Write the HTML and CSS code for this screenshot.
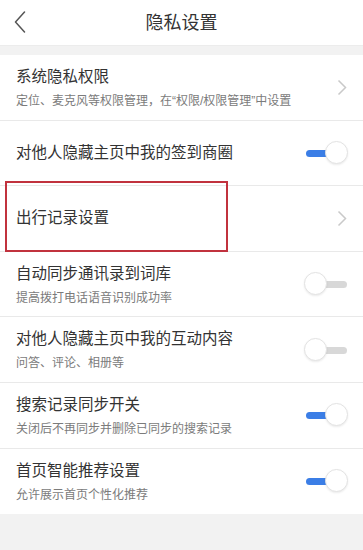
FILE: index.html
```html
<!DOCTYPE html>
<html lang="zh-CN">
<head>
<meta charset="utf-8">
<title>隐私设置</title>
<link rel="stylesheet" href="styles.css">
</head>
<body>
<div class="page">
  <header class="topbar">
    <svg class="back" width="12" height="22" viewBox="0 0 12 22"><path d="M10.5 1 L1.5 11 L10.5 21" fill="none" stroke="#555" stroke-width="1.5" stroke-linejoin="round" stroke-linecap="round"/></svg>
    <h1 class="title">隐私设置</h1>
  </header>
  <div class="gap"></div>
  <ul class="list">
    <li class="row two">
      <div class="text">
        <div class="main">系统隐私权限</div>
        <div class="sub">定位、麦克风等权限管理，在“权限/权限管理”中设置</div>
      </div>
      <svg class="chev" width="10" height="17" viewBox="0 0 10 17"><path d="M1.5 1.5 L8.5 8.5 L1.5 15.5" fill="none" stroke="#c9c9c9" stroke-width="1.5"/></svg>
    </li>
    <li class="row one">
      <div class="text"><div class="main">对他人隐藏主页中我的签到商圈</div></div>
      <span class="toggle on"><span class="track"></span><span class="knob"></span></span>
    </li>
    <li class="row one marked">
      <div class="text"><div class="main">出行记录设置</div></div>
      <svg class="chev" width="10" height="17" viewBox="0 0 10 17"><path d="M1.5 1.5 L8.5 8.5 L1.5 15.5" fill="none" stroke="#c9c9c9" stroke-width="1.5"/></svg>
      <span class="highlight"></span>
    </li>
    <li class="row two">
      <div class="text">
        <div class="main">自动同步通讯录到词库</div>
        <div class="sub">提高拨打电话语音识别成功率</div>
      </div>
      <span class="toggle off"><span class="track"></span><span class="knob"></span></span>
    </li>
    <li class="row two">
      <div class="text">
        <div class="main">对他人隐藏主页中我的互动内容</div>
        <div class="sub">问答、评论、相册等</div>
      </div>
      <span class="toggle off"><span class="track"></span><span class="knob"></span></span>
    </li>
    <li class="row two">
      <div class="text">
        <div class="main">搜索记录同步开关</div>
        <div class="sub">关闭后不再同步并删除已同步的搜索记录</div>
      </div>
      <span class="toggle on"><span class="track"></span><span class="knob"></span></span>
    </li>
    <li class="row two last">
      <div class="text">
        <div class="main">首页智能推荐设置</div>
        <div class="sub">允许展示首页个性化推荐</div>
      </div>
      <span class="toggle on"><span class="track"></span><span class="knob"></span></span>
    </li>
  </ul>
</div>
</body>
</html>
```
FILE: styles.css
```css
* { box-sizing: border-box; }
html, body {
  margin: 0;
  padding: 0;
  background: #f2f2f2;
}
body {
  font-family: "Liberation Sans", "Noto Sans CJK SC", sans-serif;
  color: #333;
}
.page {
  width: 363px;
  height: 550px;
  background: #f2f2f2;
  overflow: hidden;
}
.topbar {
  height: 46px;
  background: #fff;
  display: flex;
  align-items: center;
  justify-content: center;
  position: relative;
  border-bottom: 1px solid #ececec;
}
.back {
  position: absolute;
  left: 14px;
  top: 11px;
}
.title {
  margin: 0;
  font-size: 18px;
  font-weight: 400;
  color: #333;
  line-height: 24px;
}
.gap {
  height: 9px;
}
.list {
  list-style: none;
  margin: 0;
  padding: 0;
  background: #fff;
}
.row {
  height: 65.6px;
  display: flex;
  align-items: center;
  justify-content: space-between;
  padding: 0 15px 0 16px;
  border-bottom: 1px solid #e9e9e9;
  position: relative;
}
.row.last { border-bottom: none; }
.row.two {
  align-items: flex-start;
  padding-top: 11px;
}
.row.two .toggle,
.row.two .chev {
  align-self: center;
  margin-top: -11px;
}
.main {
  font-size: 15.5px;
  line-height: 22px;
  color: #333;
  white-space: nowrap;
}
.sub {
  font-size: 12px;
  line-height: 18px;
  color: #7b7b7b;
  margin-top: 4px;
  white-space: nowrap;
}
.chev {
  flex: none;
  margin-right: 1px;
}
.toggle {
  flex: none;
  width: 42px;
  height: 24px;
  position: relative;
  display: block;
}
.toggle .track {
  position: absolute;
  top: 9px;
  height: 7px;
  width: 24px;
  border-radius: 4px;
}
.toggle .knob {
  position: absolute;
  top: 0;
  width: 23px;
  height: 23px;
  border-radius: 50%;
  background: #fff;
  border: 1px solid #e3e3e3;
  box-shadow: 0 1px 2px rgba(0,0,0,0.08);
}
.toggle.on .track { left: 0; background: #3b7ee6; }
.toggle.on .knob { right: 0; }
.toggle.off .track { right: 1px; background: #d8d8d8; }
.toggle.off .knob { left: -2px; }
.highlight {
  position: absolute;
  left: 5px;
  top: -5px;
  width: 223px;
  height: 71px;
  border: 2px solid #c1323e;
  pointer-events: none;
}
```
